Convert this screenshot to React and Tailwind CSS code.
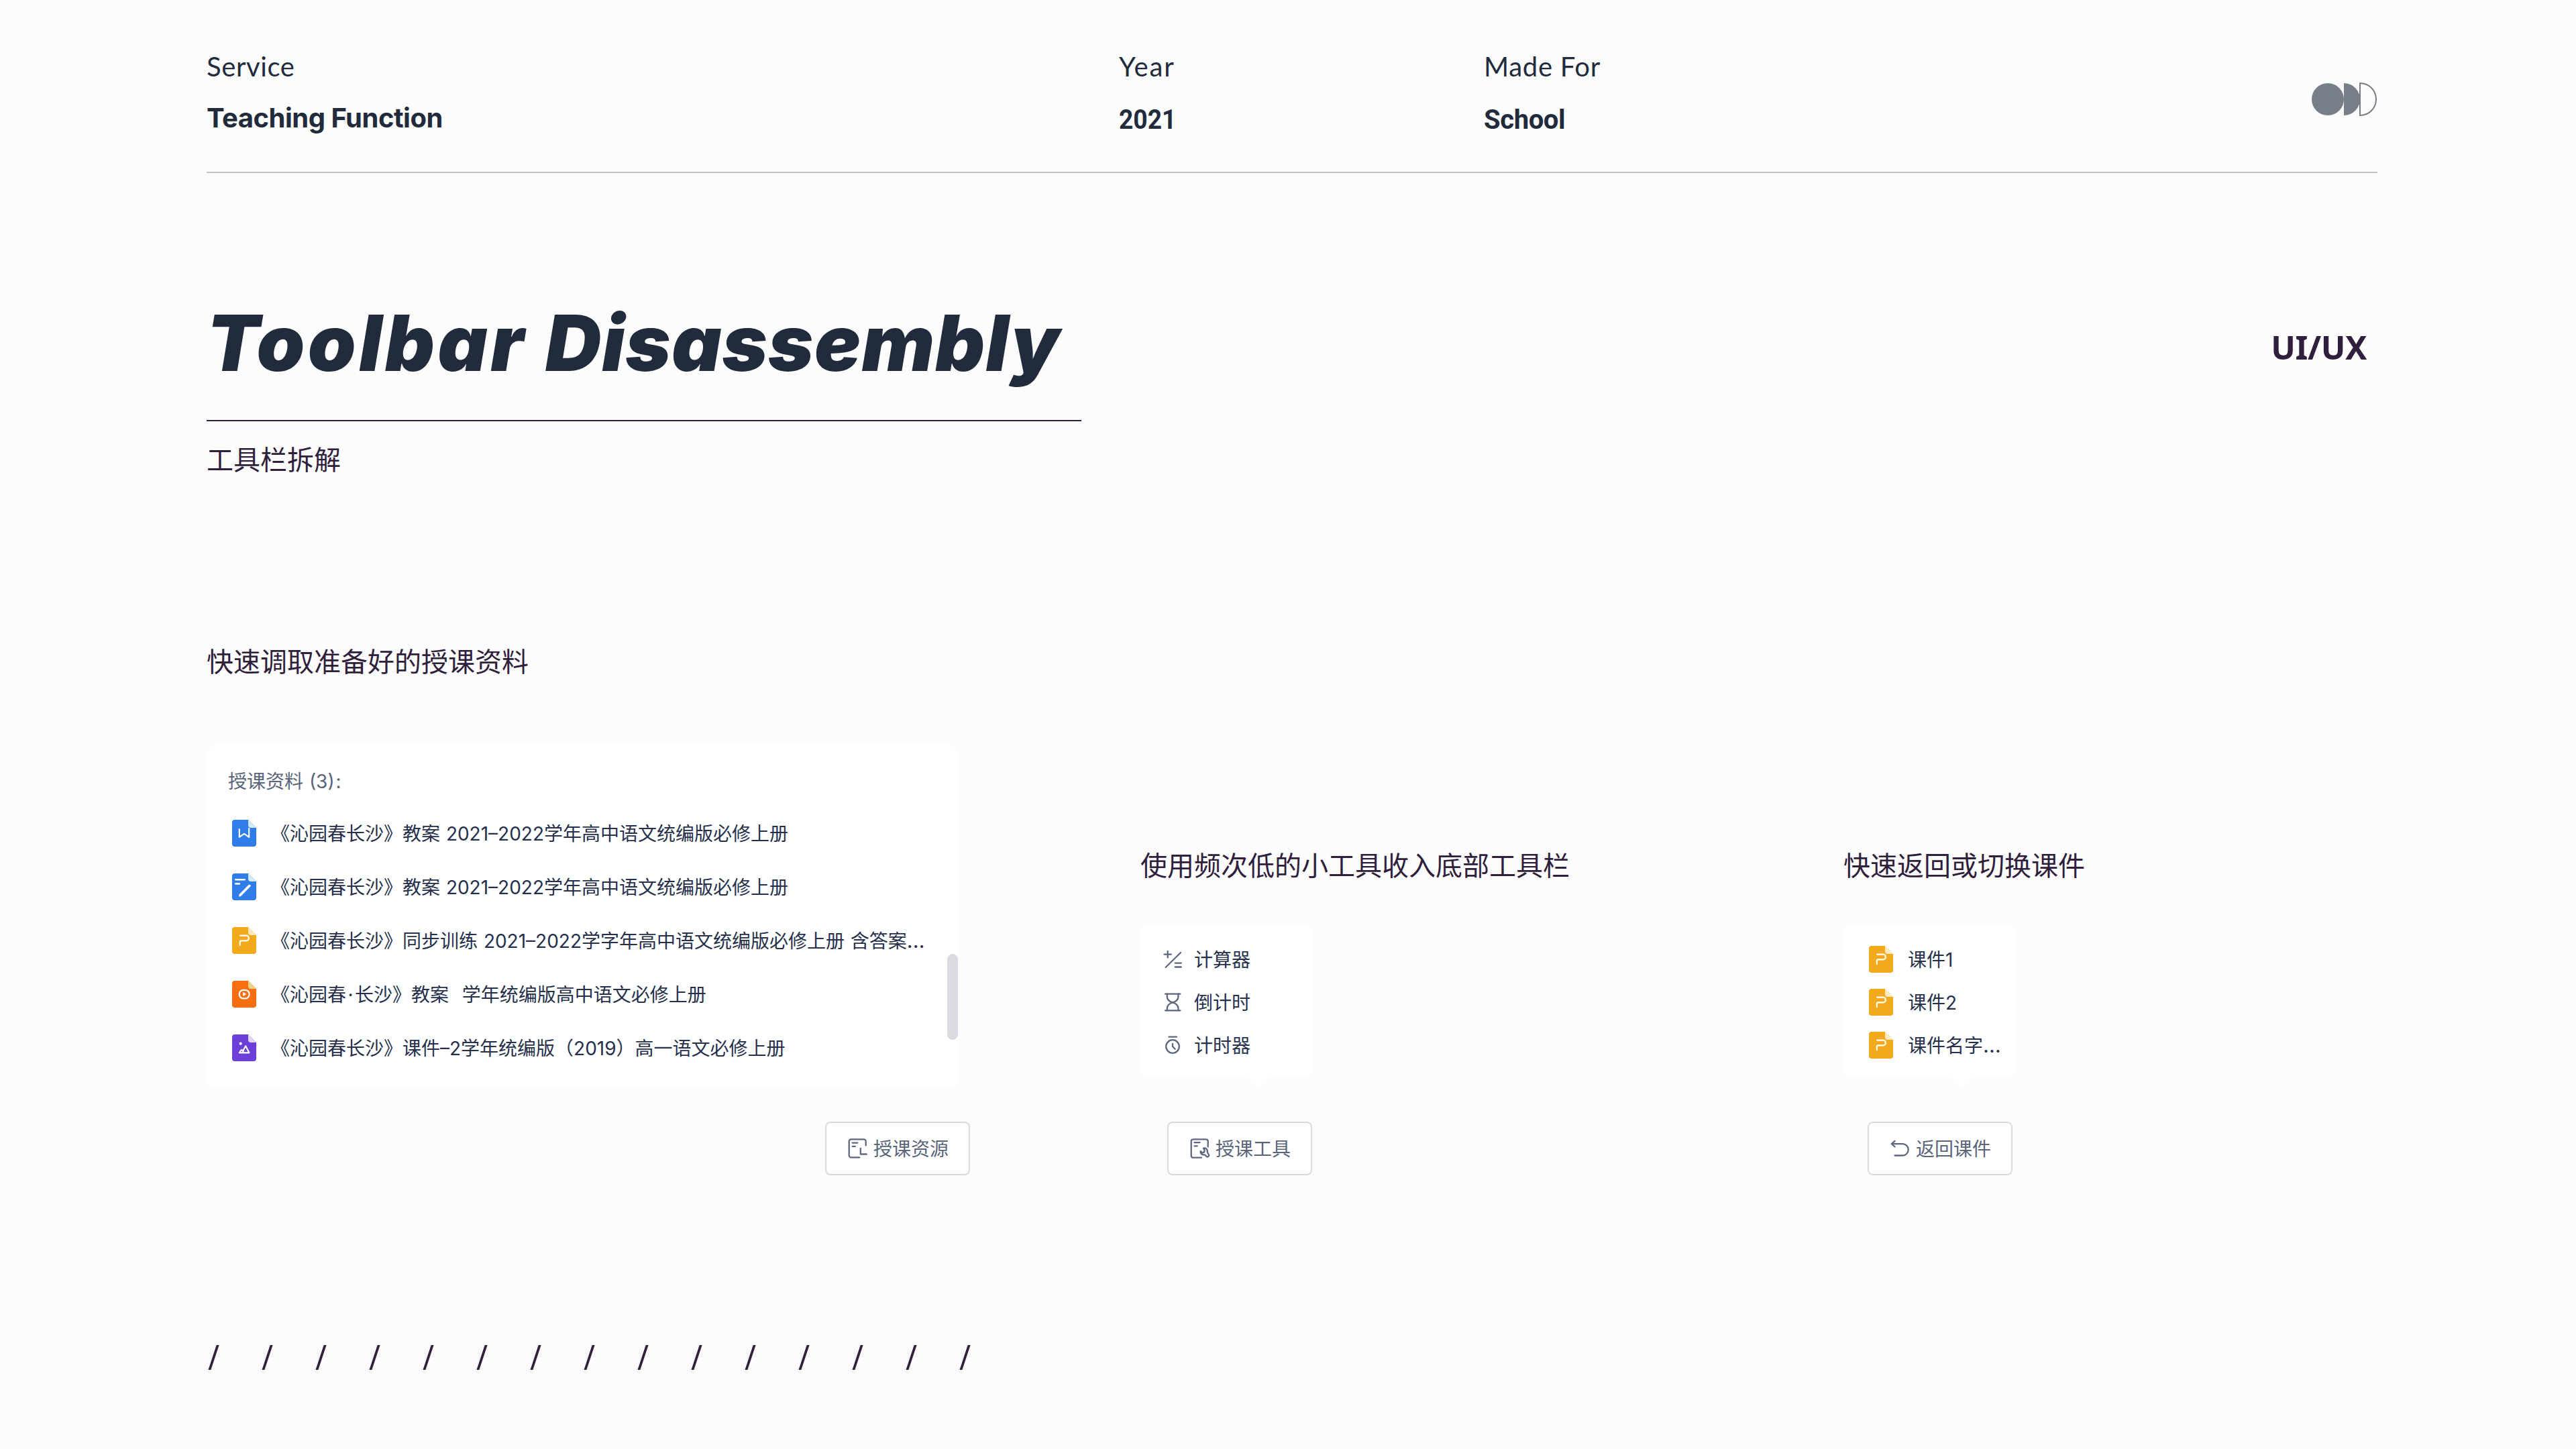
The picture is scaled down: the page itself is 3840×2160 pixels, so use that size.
const SANS = "font-['Inter','Noto_Sans_CJK_SC',sans-serif]";

const fileColors = {
  word: { body: '#2f7de9', fold: '#d3e8fc' },
  note: { body: '#2f7de9', fold: '#d3e8fc' },
  ppt: { body: '#f3aa1a', fold: '#fdebc0' },
  video: { body: '#f96f0f', fold: '#ecd08e' },
  image: { body: '#6b3fd8', fold: '#e3d8fa' },
};

const fileGlyphs = {
  word: <path d="M10.8 14.2v11.6l7.2-4.9 7.2 4.9V13" />,
  note: (
    <>
      <path d="M5.2 9.2h13.4M5.2 15.4h5.6" strokeWidth="2.6" />
      <path d="M24.6 16.9q1.3-1 2.5.2t.2 2.5L13 34l-3 .8.6-3.6z" fill="#fff" stroke="none" />
    </>
  ),
  ppt: <path d="M12 12.6h9a3.9 3.9 0 0 1 0 7.8h-7.2a2 2 0 0 0-2 2V27" />,
  video: (
    <>
      <rect x="10.8" y="13.8" width="14.8" height="12.6" rx="5.8" />
      <path d="M16.6 17.8v4.6l3.8-2.3z" fill="#fff" strokeWidth="1" />
    </>
  ),
  image: (
    <>
      <circle cx="12.7" cy="13.7" r="2.1" fill="#fff" stroke="none" />
      <path d="M10.8 27.3l3-4.4 2.4 1.6 4-7.2 5.2 10zM15.6 26.8l1.6-3" />
    </>
  ),
};

const FileIcon = ({ type }) => (
  <div className="flex h-12 w-12 shrink-0 items-center justify-center">
    <svg width="36" height="40" viewBox="0 0 36 40" fill="none">
      <path d="M4 0h20l12 12v24a4 4 0 0 1-4 4H4a4 4 0 0 1-4-4V4a4 4 0 0 1 4-4z" fill={fileColors[type].body} />
      <path d="M24 0v8a4 4 0 0 0 4 4h8z" fill={fileColors[type].fold} />
      <g stroke="#fff" strokeWidth="2.2" strokeLinecap="round" strokeLinejoin="round">
        {fileGlyphs[type]}
      </g>
    </svg>
  </div>
);

const linePaths = {
  calculator: ['M3.6 8.7h10.2M8.7 3.8v9.8M28 6 5.6 28', 'M19.8 21.7h9M19.8 27.5h9'],
  hourglass: [
    'M5 3.7h22.4M5 28.3h22.4',
    'M7.8 3.7V8c0 4 3.6 7 8.3 8.4 4.7-1.4 8.3-4.4 8.3-8.4V3.7',
    'M7.8 28.3V25c0-4 3.6-7.3 8.3-8.6 4.7 1.3 8.3 4.6 8.3 8.6v3.3',
  ],
  timer: ['M10.4 3.7h11.6', 'M16 8.2a9.8 9.8 0 1 0 0 19.6 9.8 9.8 0 0 0 0-19.6z', 'M16 13.8V18l3.6 3.8'],
  resource: [
    'M19.2 29.4H6.7a3 3 0 0 1-3-3V5.4a3 3 0 0 1 3-3h19a3 3 0 0 1 3 3v6.2',
    'M8.6 7.6h7.8M8.6 12.8h4.2',
    'M20.8 16v8.5h9',
  ],
  tools: [
    'M19 29.7H6.7a3 3 0 0 1-3-3V5.3a3 3 0 0 1 3-3h19a3 3 0 0 1 3 3v8.3',
    'M8.6 7.2h8M8.6 12.4h4',
    'M22 15.6c3.5-.8 6.3 1.6 5.8 5.2-.1.9.2 1.5.8 2.3l1 1.5a2.3 2.3 0 0 1-3.6 2.9l-1.3-1.6c-.5-.5-1-.6-1.8-.5-3.2.3-5.8-2-5.2-5.3l3 2.3 2.6-1 .3-2.8z',
  ],
  back: ['M8.6 4.9 3.8 9.1l4.8 4.4', 'M4.4 9.1H20a8.7 8.7 0 0 1 0 17.4H8.6'],
};

const LineIcon = ({ name }) => (
  <svg
    className="shrink-0"
    width="32"
    height="32"
    viewBox="0 0 32 32"
    fill="none"
    stroke="#5d677e"
    strokeWidth="2.3"
    strokeLinecap="round"
    strokeLinejoin="round"
  >
    {linePaths[name].map((d) => (
      <path key={d} d={d} />
    ))}
  </svg>
);

// slightly larger than the label text so the dots spread out
const Ellipsis = () => <span className="text-[31px] leading-none">…</span>;

const materials = [
  { type: 'word', name: '《沁园春长沙》教案 2021–2022学年高中语文统编版必修上册' },
  { type: 'note', name: '《沁园春长沙》教案 2021–2022学年高中语文统编版必修上册' },
  {
    type: 'ppt',
    name: (
      <>
        《沁园春长沙》同步训练 2021–2022学字年高中语文统编版必修上册 含答案
        <Ellipsis />
      </>
    ),
  },
  {
    type: 'video',
    name: (
      <>
        《沁园春<span className="mx-[2.5px]">·</span>长沙》教案<span className="mr-0.5">{'  '}</span>学年统编版高中语文必修上册
      </>
    ),
  },
  { type: 'image', name: '《沁园春长沙》课件–2学年统编版（2019）高一语文必修上册' },
];

const tools = [
  { icon: 'calculator', name: '计算器' },
  { icon: 'hourglass', name: '倒计时' },
  { icon: 'timer', name: '计时器' },
];

const Logo = () => (
  <svg className="mt-[122px]" width="98" height="52" viewBox="0 0 98 52">
    <circle cx="24" cy="26" r="24" fill="#777e88" />
    <path d="M48 2a24 24 0 0 1 0 48z" fill="#777e88" />
    <path d="M72 2a24 24 0 0 1 0 48z" fill="#fcfcfc" stroke="#777e88" strokeWidth="2" />
  </svg>
);

const SectionTitle = ({ children }) => (
  <h2 className="text-[40px] leading-[48px] whitespace-nowrap text-[#301f3c]">{children}</h2>
);

const ToolButton = ({ icon, label, className }) => (
  <button
    className={`flex h-20 w-[216px] items-center gap-2 rounded-lg border-2 border-[#d9dae0] bg-white pl-[30px] text-[28px] leading-10 whitespace-nowrap text-[#5a647b] ${className}`}
  >
    <LineIcon name={icon} />
    <span className="pt-0.5">{label}</span>
  </button>
);

const Popover = ({ children }) => (
  <div className="relative mt-[67px] flex h-56 w-64 flex-col rounded-lg bg-white py-4 pl-8 text-[28px] leading-10 whitespace-nowrap text-[#26304d]">
    {children}
    <svg className="absolute top-full left-40" width="32" height="16" viewBox="0 0 32 16">
      <path d="M0 0h32L17 15q-1 1-2 0z" fill="#fff" />
    </svg>
  </div>
);

const PopoverItem = ({ icon, children }) => (
  <div className="flex h-16 items-center gap-4">
    {icon}
    <span className="pt-0.5">{children}</span>
  </div>
);

export default function App() {
  return (
    <div className={`flex h-[2160px] w-[3840px] flex-col overflow-hidden bg-[#fcfcfc] pr-[296px] pl-[308px] ${SANS}`}>
      <header className="grid h-[258px] grid-cols-[1360px_544px_1fr_auto] border-b-2 border-[#c0c0c0] text-[40px] leading-[48px] text-[#222b3c]">
        <div className="pt-[75px]">
          <p className="font-['Lato',sans-serif] tracking-[0.6px]">Service</p>
          <p className="mt-[29px] font-bold tracking-[-0.5px]">Teaching Function</p>
        </div>
        <div className="pt-[75px]">
          <p className="font-['Lato',sans-serif] tracking-[1.9px]">Year</p>
          <p className="mt-8 origin-left scale-x-[0.93] font-['Roboto',sans-serif] font-bold">2021</p>
        </div>
        <div className="pt-[75px]">
          <p className="font-['Lato',sans-serif] tracking-[0.7px]">Made For</p>
          <p className="mt-8 font-['Roboto',sans-serif] font-bold tracking-[-0.4px]">School</p>
        </div>
        <Logo />
      </header>

      <div className="mt-[190px] flex items-start justify-between">
        <h1 className="h-[180px] w-[1304px] border-b-2 border-[#301f3c] text-[115px] leading-[128px] font-black tracking-[1.2px] whitespace-nowrap text-[#222b3c] italic">
          <span className="tracking-[4.5px]">Toolbar </span>Disassembly
        </h1>
        <p className="mt-[37px] mr-[16px] font-['Noto_Sans',sans-serif] text-[48.5px] leading-[64px] font-bold tracking-[-0.4px] text-[#301f3c]">
          UI/UX
        </p>
      </div>
      <p className="mt-[34px] text-[40px] leading-[48px] text-[#301f3c]">工具栏拆解</p>

      <main className="mt-[253px] flex items-end">
        <section className="flex w-[1138px] flex-col">
          <SectionTitle>快速调取准备好的授课资料</SectionTitle>
          <div className="relative mt-[99px] h-[512px] w-[1120px] rounded-2xl bg-white pt-[35px] pl-8 text-[28px] leading-10 [word-spacing:1px] text-[#26304d]">
            <p className="text-[#5a647b]">
              授课资料 (3)<span className="ml-0.5">:</span>
            </p>
            <ul className="mt-[17px]">
              {materials.map((item, i) => (
                <li key={i} className="flex h-20 items-center gap-4 whitespace-pre">
                  <FileIcon type={item.type} />
                  <span className="pt-0.5">{item.name}</span>
                </li>
              ))}
            </ul>
            <div className="absolute top-[312px] right-0 h-32 w-4 rounded-full bg-[#dadbe0]" />
          </div>
          <ToolButton icon="resource" label="授课资源" className="mt-[50px] self-end" />
        </section>

        <section className="ml-[254px] w-[640px]">
          <SectionTitle>使用频次低的小工具收入底部工具栏</SectionTitle>
          <Popover>
            {tools.map((tool) => (
              <PopoverItem key={tool.name} icon={<LineIcon name={tool.icon} />}>
                {tool.name}
              </PopoverItem>
            ))}
          </Popover>
          <ToolButton icon="tools" label="授课工具" className="mt-[66px] ml-10" />
        </section>

        <section className="ml-[408px]">
          <SectionTitle>快速返回或切换课件</SectionTitle>
          <Popover>
            <PopoverItem icon={<FileIcon type="ppt" />}>课件1</PopoverItem>
            <PopoverItem icon={<FileIcon type="ppt" />}>课件2</PopoverItem>
            <PopoverItem icon={<FileIcon type="ppt" />}>
              课件名字
              <Ellipsis />
            </PopoverItem>
          </Popover>
          <ToolButton icon="back" label="返回课件" className="mt-[66px] ml-9" />
        </section>
      </main>

      <div className="mt-[238px] ml-0.5 flex font-['Noto_Sans',sans-serif] text-[51px] leading-[64px] text-[#301f3c]">
        {Array.from({ length: 15 }, (_, i) => (
          <span key={i} className="w-20 origin-left scale-x-90">/</span>
        ))}
      </div>
    </div>
  );
}
